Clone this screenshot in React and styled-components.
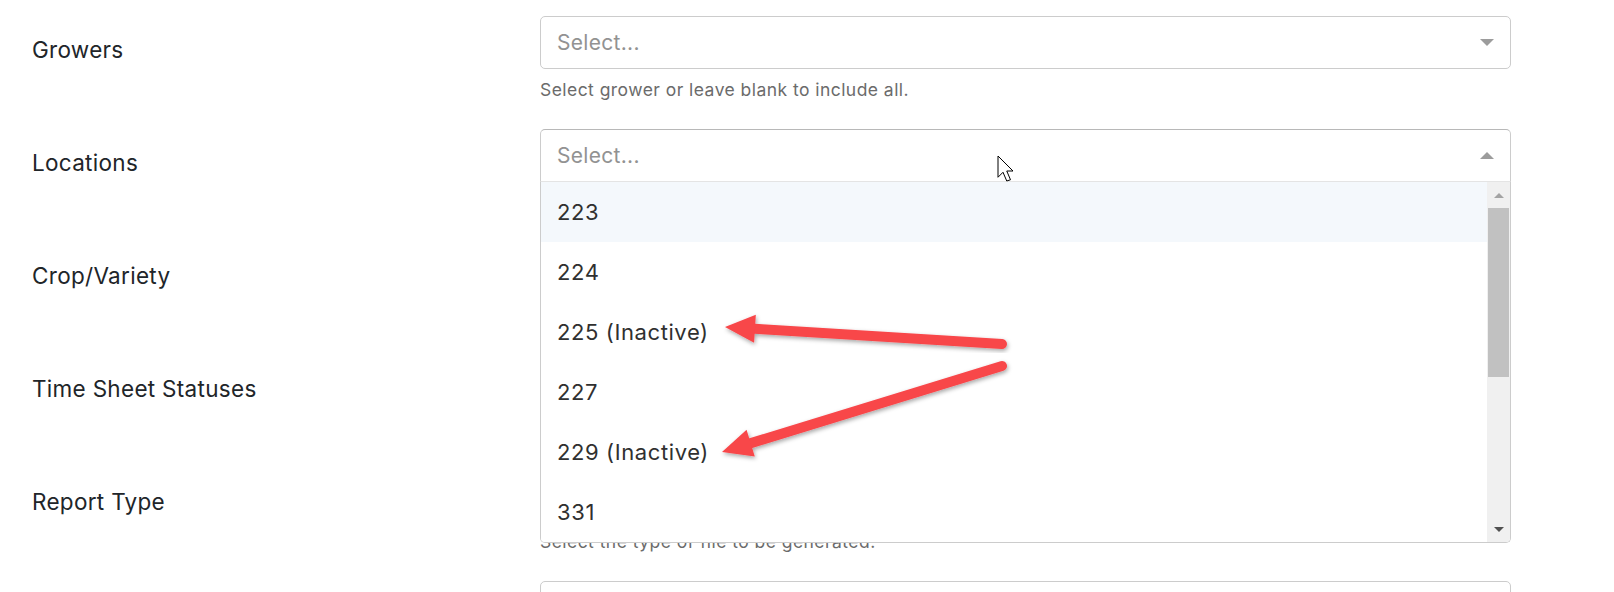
import React from 'react';
import styled, { createGlobalStyle } from 'styled-components';

const GlobalStyle = createGlobalStyle`
  html, body {
    margin: 0;
    padding: 0;
    background: #ffffff;
    font-family: Inter, "Liberation Sans", Arial, sans-serif;
  }
`;

const StyledPage = styled.div`
  position: relative;
  width: 1614px;
  height: 592px;
  overflow: hidden;
  padding: 16px 0 0 32px;
  box-sizing: border-box;
`;

const StyledForm = styled.div`
  display: flex;
  flex-direction: column;
  gap: 28px;
`;

const StyledRow = styled.div`
  display: grid;
  grid-template-columns: 508px 971px;
`;

const StyledLabel = styled.label`
  padding-top: 17px;
  font-size: 22.5px;
  letter-spacing: 0.3px;
  line-height: 33px;
  color: #212529;
`;

const StyledControlWrap = styled.div`
  position: relative;
`;

const StyledControl = styled.div`
  height: 53px;
  box-sizing: border-box;
  display: flex;
  align-items: center;
  justify-content: space-between;
  padding: 0 16px;
  background: #ffffff;
  border: 1px solid #cccccc;
  border-top-color: ${({ open }) => (open ? '#b8b8b8' : '#cccccc')};
  border-bottom-color: ${({ open }) => (open ? '#e4e4e4' : '#cccccc')};
  border-radius: ${({ open }) => (open ? '5px 5px 0 0' : '5px')};
`;

const StyledPlaceholder = styled.span`
  font-size: 21px;
  letter-spacing: 0.3px;
  color: #929292;
`;

const StyledCaret = styled.span`
  width: 0;
  height: 0;
  border-left: 7px solid transparent;
  border-right: 7px solid transparent;
  ${({ up }) => (up ? 'border-bottom: 7px solid #9c9c9c;' : 'border-top: 7px solid #9c9c9c;')}
`;

const StyledHelp = styled.div`
  margin-top: 9px;
  font-size: 17.5px;
  letter-spacing: 0.45px;
  line-height: 23px;
  color: #6b6b6b;
`;

const StyledMenu = styled.div`
  position: absolute;
  top: 100%;
  left: 0;
  right: 0;
  height: 361px;
  box-sizing: border-box;
  display: flex;
  background: #ffffff;
  border: 1px solid #cccccc;
  border-top: none;
  border-radius: 0 0 5px 5px;
  overflow: hidden;
  z-index: 10;
`;

const StyledOptions = styled.div`
  flex: 1;
`;

const StyledOption = styled.div`
  height: 60px;
  display: flex;
  align-items: center;
  padding: 0 16px;
  font-size: 22px;
  letter-spacing: 0.6px;
  color: #303030;
  background: ${({ active }) => (active ? '#f4f8fc' : '#ffffff')};
`;

const StyledScrollbar = styled.div`
  width: 23px;
  display: flex;
  flex-direction: column;
  background: #f0f0f0;
`;

const StyledScrollButton = styled.div`
  height: 26px;
  display: flex;
  align-items: center;
  justify-content: center;

  &::after {
    content: '';
    width: 0;
    height: 0;
    border-left: 5px solid transparent;
    border-right: 5px solid transparent;
    ${({ down }) =>
      down ? 'border-top: 5px solid #505050;' : 'border-bottom: 5px solid #a3a3a3;'}
  }
`;

const StyledThumb = styled.div`
  height: 169px;
  margin: 0 1px;
  background: #c1c1c1;
`;

const StyledSpacer = styled.div`
  flex: 1;
`;

const StyledOverlay = styled.svg`
  position: absolute;
  top: 0;
  left: 0;
  width: 1614px;
  height: 592px;
  pointer-events: none;
  z-index: 20;
`;

const fields = [
  { label: 'Growers', help: 'Select grower or leave blank to include all.' },
  { label: 'Locations', help: 'Select location or leave blank to include all.', open: true },
  { label: 'Crop/Variety', help: 'Select crop or leave blank to include all.' },
  { label: 'Time Sheet Statuses', help: 'Select status or leave blank to include all.' },
  { label: 'Report Type', help: 'Select the type of file to be generated.' },
  { label: 'Date Range', help: '' },
];

const locations = ['223', '224', '225 (Inactive)', '227', '229 (Inactive)', '331'];

// tip, tail -> arrow with a triangular head
const Arrow = ({ tip, tail }) => {
  const dx = tip[0] - tail[0];
  const dy = tip[1] - tail[1];
  const len = Math.hypot(dx, dy);
  const ux = dx / len;
  const uy = dy / len;
  const head = 30;
  const half = 14;
  const bx = tip[0] - ux * head;
  const by = tip[1] - uy * head;
  const nx = -uy;
  const ny = ux;
  const pts = [
    `${tip[0]},${tip[1]}`,
    `${bx + nx * half},${by + ny * half}`,
    `${bx - nx * half},${by - ny * half}`,
  ].join(' ');

  return (
    <g filter="url(#shadow)">
      <line
        x1={tail[0]}
        y1={tail[1]}
        x2={bx + ux * 4}
        y2={by + uy * 4}
        stroke="#f8464a"
        strokeWidth="10"
        strokeLinecap="round"
      />
      <polygon points={pts} fill="#f8464a" />
    </g>
  );
};

const SelectMenu = () => (
  <StyledMenu>
    <StyledOptions>
      {locations.map((item, i) => (
        <StyledOption key={item} active={i === 0}>
          {item}
        </StyledOption>
      ))}
    </StyledOptions>
    <StyledScrollbar>
      <StyledScrollButton />
      <StyledThumb />
      <StyledSpacer />
      <StyledScrollButton down />
    </StyledScrollbar>
  </StyledMenu>
);

const App = () => (
  <>
    <GlobalStyle />
    <StyledPage>
      <StyledForm>
        {fields.map((field) => (
          <StyledRow key={field.label}>
            <StyledLabel>{field.label}</StyledLabel>
            <div>
              <StyledControlWrap>
                <StyledControl open={field.open}>
                  <StyledPlaceholder>Select...</StyledPlaceholder>
                  <StyledCaret up={field.open} />
                </StyledControl>
                {field.open && <SelectMenu />}
              </StyledControlWrap>
              {field.help && <StyledHelp>{field.help}</StyledHelp>}
            </div>
          </StyledRow>
        ))}
      </StyledForm>

      <StyledOverlay viewBox="0 0 1614 592">
        <defs>
          <filter id="shadow" x="-10%" y="-30%" width="120%" height="160%">
            <feDropShadow dx="1" dy="2" stdDeviation="2" floodColor="#000" floodOpacity="0.35" />
          </filter>
        </defs>
        <Arrow tail={[1002, 344]} tip={[725, 327]} />
        <Arrow tail={[1002, 366]} tip={[722, 452]} />
        <path
          d="M0 0 L0 17 L4 13 L7 20 L10 19 L7 12 L12 12 Z"
          transform="translate(998 156) scale(1.25)"
          fill="#ffffff"
          stroke="#000000"
          strokeWidth="0.8"
          strokeLinejoin="round"
        />
      </StyledOverlay>
    </StyledPage>
  </>
);

export default App;
